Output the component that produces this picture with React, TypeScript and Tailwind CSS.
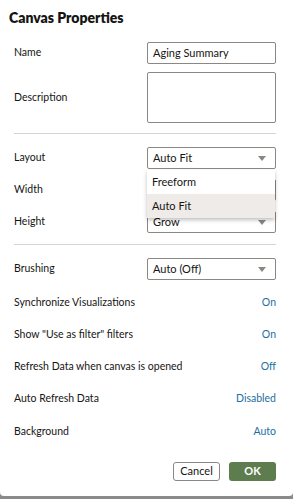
import React from 'react';

const font = { fontFamily: 'Lato, "Noto Sans", sans-serif' };

const Arrow: React.FC = () => (
  <svg width="8" height="5" viewBox="0 0 8 5" className="shrink-0">
    <path d="M0 0 H8 L4 5 Z" fill="#8b8782" />
  </svg>
);

const Select: React.FC<{ value?: string }> = ({ value }) => (
  <div className="w-[129px] h-[22px] border border-[#8b8782] rounded-[2px] bg-white flex items-center justify-between pl-[5px] pr-[9px] text-[11px] text-[#161513]">
    <span>{value}</span>
    <Arrow />
  </div>
);

const Row: React.FC<{ label: string; children?: React.ReactNode; className?: string }> = ({ label, children, className }) => (
  <div className={`flex items-center justify-between ${className ?? ''}`}>
    <span className="text-[10.5px] text-[#161513]">{label}</span>
    {children}
  </div>
);

const Toggle: React.FC<{ label: string; value: string; className?: string }> = ({ label, value, className }) => (
  <div className={`flex items-center justify-between h-[14px] ${className ?? ''}`}>
    <span className="text-[10.5px] text-[#161513]">{label}</span>
    <span className="text-[10.5px] text-[#1d6fa0]">{value}</span>
  </div>
);

export default function App() {
  return (
    <div className="w-[293px] h-[499px] bg-[#8a8a8a]" style={font}>
      <div className="w-[293px] h-[496px] bg-white rounded-b-[4px] relative">
        <div className="pl-[9px] pt-[9px] text-[14px] font-extrabold text-[#161513] leading-[18px]">Canvas Properties</div>

        <div className="pl-[14px] pr-[17px]">
          <Row label="Name" className="mt-[15px]">
            <div className="w-[129px] h-[22px] border border-[#8b8782] rounded-[2px] flex items-center pl-[5px] text-[11px] text-[#161513]">
              Aging Summary
            </div>
          </Row>
          <Row label="Description" className="mt-[8px]">
            <div className="w-[129px] h-[51px] border border-[#8b8782] rounded-[2px]" />
          </Row>

          <div className="h-px bg-[#d6d3d0] mt-[10px]" />

          <Row label="Layout" className="mt-[13px]">
            <Select value="Auto Fit" />
          </Row>
          <Row label="Width" className="mt-[10px]">
            <Select />
          </Row>
          <Row label="Height" className="mt-[10px]">
            <Select value="Grow" />
          </Row>

          <div className="h-px bg-[#d6d3d0] mt-[11px]" />

          <Row label="Brushing" className="mt-[13px]">
            <Select value="Auto (Off)" />
          </Row>

          <Toggle label="Synchronize Visualizations" value="On" className="mt-[16px]" />
          <Toggle label={'Show "Use as filter" filters'} value="On" className="mt-[18px]" />
          <Toggle label="Refresh Data when canvas is opened" value="Off" className="mt-[18px]" />
          <Toggle label="Auto Refresh Data" value="Disabled" className="mt-[18px]" />
          <Toggle label="Background" value="Auto" className="mt-[19px]" />

          <div className="flex justify-end gap-[9px] mt-[23px]">
            <button className="w-[47px] h-[19px] border border-[#8b8782] rounded-[3px] bg-white text-[11px] text-[#161513] flex items-center justify-center">
              Cancel
            </button>
            <button className="w-[47px] h-[19px] rounded-[3px] bg-[#5e7d4f] text-[11px] font-bold text-white flex items-center justify-center">
              OK
            </button>
          </div>
        </div>

        <div className="absolute left-[147px] top-[170px] w-[128px] bg-white shadow-[0_2px_4px_rgba(0,0,0,0.25)] text-[11px] text-[#161513]">
          <div className="h-[24px] flex items-center pl-[5px]">Freeform</div>
          <div className="h-[24px] flex items-center pl-[5px] bg-[#eeebe8]">Auto Fit</div>
        </div>
      </div>
    </div>
  );
}
